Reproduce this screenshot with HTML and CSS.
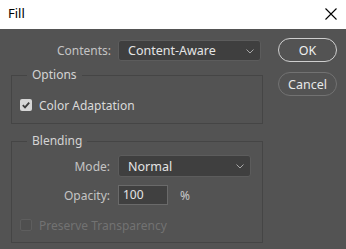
FILE: index.html
```html
<!DOCTYPE html>
<html lang="en">
<head>
    <meta charset="UTF-8">
    <title>Fill</title>
    <link rel="stylesheet" href="styles.css">
</head>
<body>

<header class="titlebar">
    <span class="title">Fill</span>
    <svg class="close" width="12" height="12" viewBox="0 0 12 12">
        <path d="M0.5 0.5 L11.5 11.5 M11.5 0.5 L0.5 11.5" stroke="#000" stroke-width="1.1" fill="none"/>
    </svg>
</header>

<div class="dialog">
    <div class="main">
        <div class="row">
            <span class="label">Contents:</span>
            <div class="select wide">
                <span>Content-Aware</span>
                <svg class="chev" width="8" height="5" viewBox="0 0 8 5"><path d="M0.5 0.5 L4 4 L7.5 0.5" stroke="#a8a8a8" fill="none"/></svg>
            </div>
        </div>

        <fieldset class="group options">
            <legend>Options</legend>
            <div class="check-row">
                <span class="box checked">
                    <svg width="12" height="12" viewBox="0 0 12 12"><path d="M2.8 6.2 L5 8.4 L9.2 3.6" stroke="#3b3b3b" stroke-width="1.8" fill="none"/></svg>
                </span>
                <span>Color Adaptation</span>
            </div>
        </fieldset>

        <fieldset class="group blending">
            <legend>Blending</legend>
            <div class="row">
                <span class="label short">Mode:</span>
                <div class="select mode">
                    <span>Normal</span>
                    <svg class="chev" width="8" height="5" viewBox="0 0 8 5"><path d="M0.5 0.5 L4 4 L7.5 0.5" stroke="#a8a8a8" fill="none"/></svg>
                </div>
            </div>
            <div class="row opacity-row">
                <span class="label short">Opacity:</span>
                <div class="field">100</div>
                <span class="unit">%</span>
            </div>
            <div class="check-row disabled">
                <span class="box"></span>
                <span>Preserve Transparency</span>
            </div>
        </fieldset>
    </div>

    <div class="buttons">
        <div class="btn primary">OK</div>
        <div class="btn">Cancel</div>
    </div>
</div>

</body>
</html>
```

FILE: styles.css
```css
body {
    margin: 0;
    background-color: #535353;
    font-family: "Noto Sans", "Open Sans", sans-serif;
    font-size: 12px;
    color: #d2d2d2;
    height: 249px;
    overflow: hidden;
}
.titlebar {
    height: 29px;
    background-color: #fff;
    display: flex;
    align-items: center;
    justify-content: space-between;
    padding: 0 9px 0 8px;
}
.title {
    color: #000;
    font-size: 13px;
    margin-top: -3px;
}
.close {
    margin-top: -2px;
}
.dialog {
    display: flex;
    padding-top: 10px;
}
.main {
    width: 252px;
    margin-left: 11px;
    padding-top: 1px;
}
.row {
    display: flex;
    align-items: center;
}
.label {
    width: 100px;
    margin-right: 7px;
    text-align: right;
    color: #c4c4c4;
}
.label.short {
    width: 98px;
    margin-right: 8px;
}
.select {
    height: 21px;
    box-sizing: border-box;
    background-color: #3f3f3f;
    border: 1px solid #5c5c5c;
    border-radius: 3px;
    display: flex;
    align-items: center;
    justify-content: space-between;
    padding: 0 6px 0 9px;
    color: #e4e4e4;
    font-size: 12.5px;
}
.select.wide {
    width: 143px;
}
.select.mode {
    width: 133px;
    height: 22px;
}
.chev {
    margin-top: 1px;
}
.group {
    margin: 0;
    padding: 0;
    border: 1px solid #454545;
}
.group legend {
    margin-left: 15px;
    padding: 0 5px;
    line-height: 16px;
    color: #d4d4d4;
}
.options {
    margin-top: 6px;
    padding: 14px 0 10px 0;
}
.blending {
    margin-top: 9px;
    padding: 6px 0 9px 0;
}
.opacity-row {
    margin-top: 8px;
}
.field {
    width: 50px;
    height: 20px;
    box-sizing: border-box;
    background-color: #404040;
    border: 1px solid #6a6a6a;
    padding-left: 4px;
    line-height: 18px;
    color: #e4e4e4;
}
.unit {
    margin-left: 12px;
    color: #c8c8c8;
}
.check-row {
    display: flex;
    align-items: center;
    height: 16px;
    margin-left: 8px;
    color: #dadada;
}
.blending .check-row {
    margin-top: 12px;
}
.box {
    width: 12px;
    height: 12px;
    box-sizing: border-box;
    border-radius: 2px;
    margin-right: 7px;
    display: flex;
}
.box.checked {
    background-color: #d6d6d6;
}
.disabled {
    color: #727272;
}
.disabled .box {
    border: 1px solid #5e5e5e;
    background-color: #4f4f4f;
}
.buttons {
    margin-left: 15px;
    margin-top: -1px;
    display: flex;
    flex-direction: column;
    gap: 10px;
}
.btn {
    width: 59px;
    height: 24px;
    box-sizing: border-box;
    border: 1px solid #727272;
    border-radius: 12px;
    display: flex;
    align-items: center;
    justify-content: center;
    color: #e8e8e8;
    font-size: 12.5px;
}
.btn.primary {
    border: 1.5px solid #cfcfcf;
    color: #f0f0f0;
}
```
